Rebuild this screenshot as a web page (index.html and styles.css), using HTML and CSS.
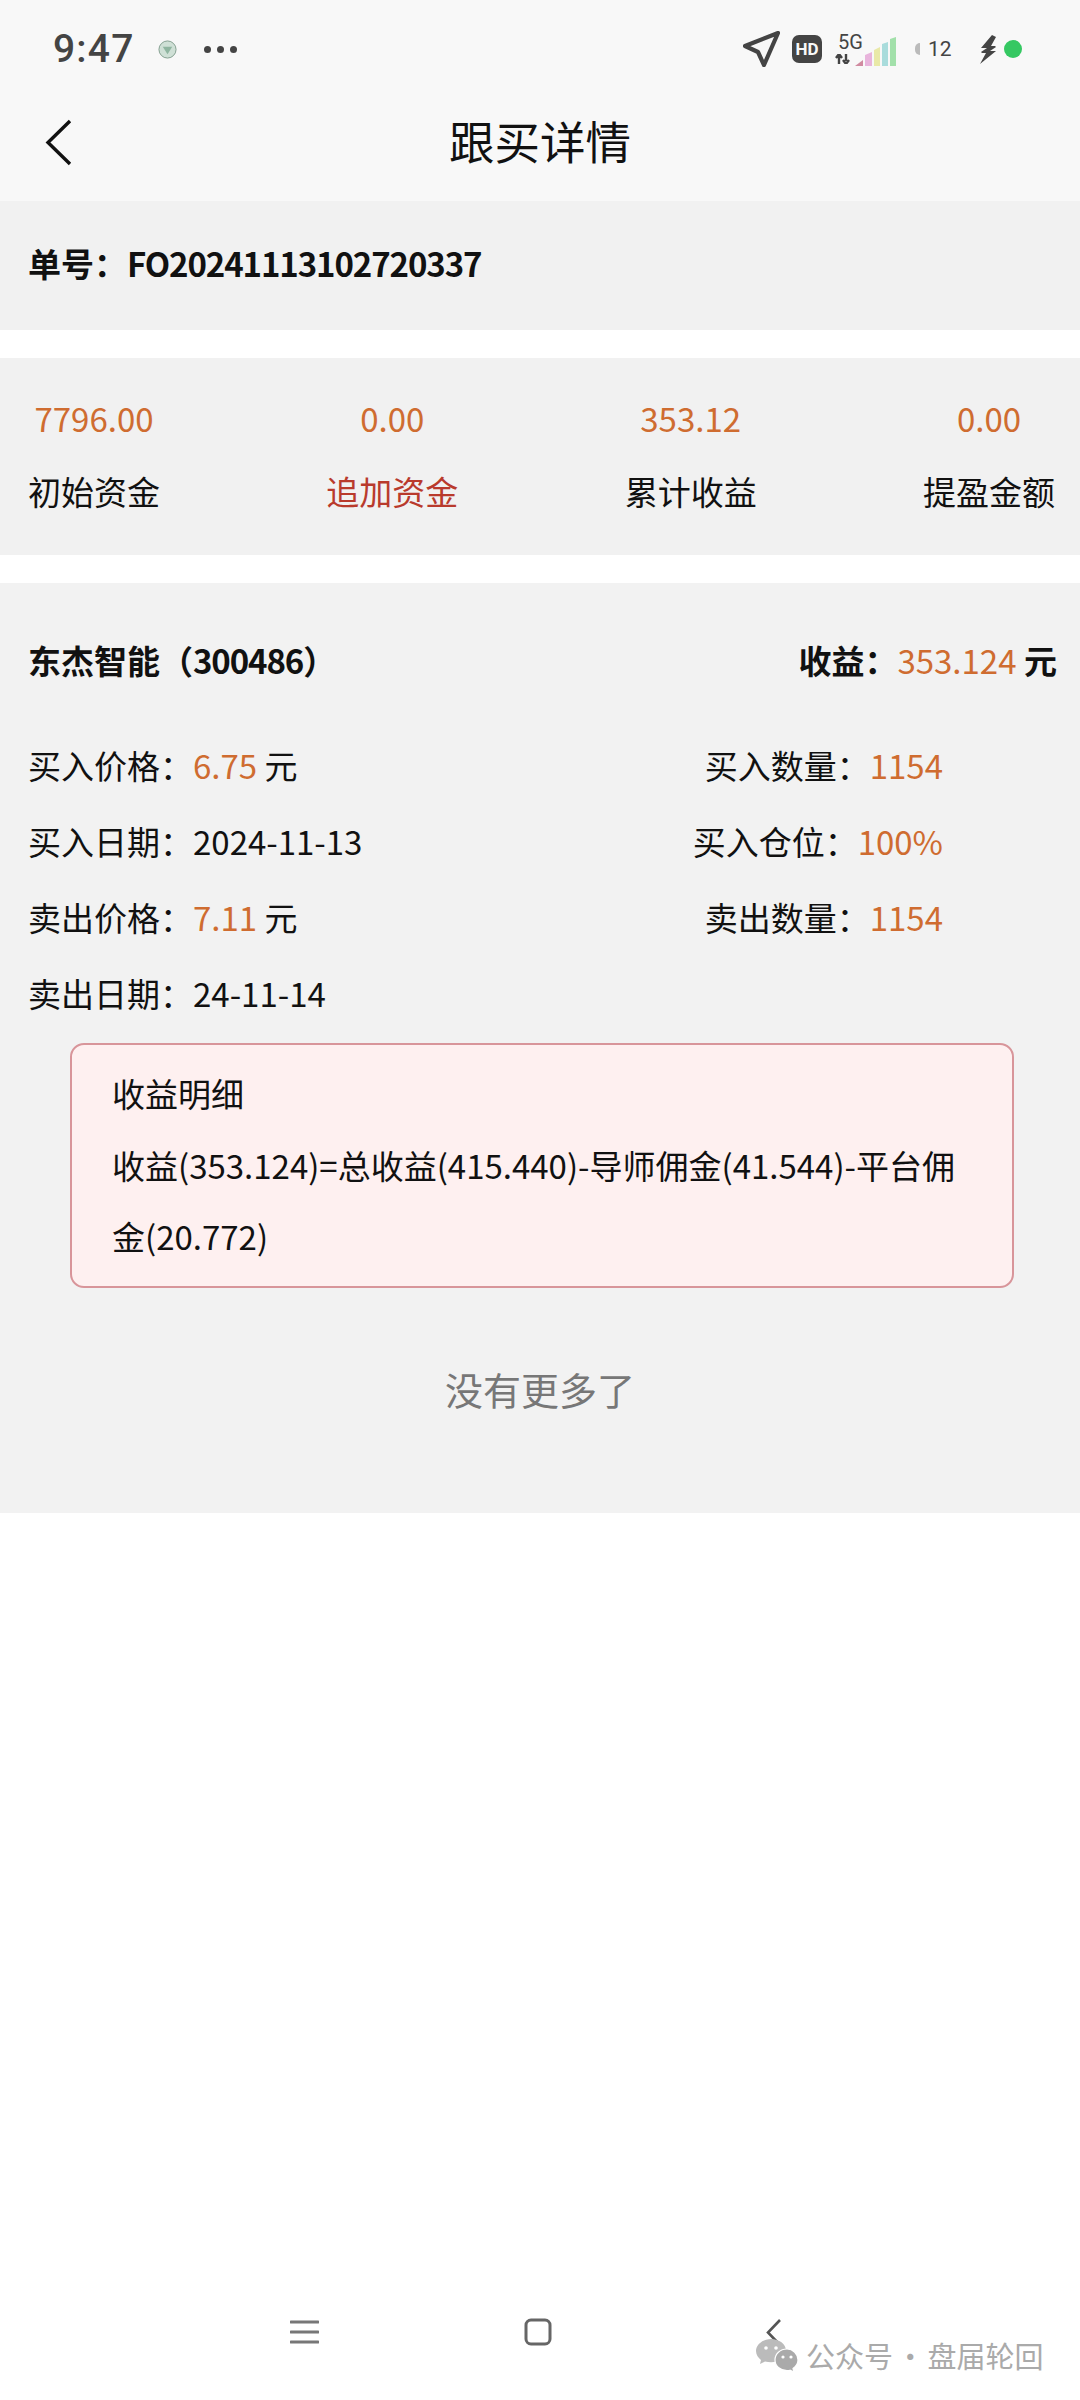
FILE: index.html
```html
<!DOCTYPE html>
<html lang="zh-CN">
<head>
    <meta charset="UTF-8">
    <meta name="viewport" content="width=device-width, initial-scale=1.0">
    <title>跟买详情</title>
    <link rel="stylesheet" href="styles.css">
</head>
<body>
    <div class="pagina">
        <!-- Status bar -->
        <div class="status">
            <span class="ora">9:47</span>
            <svg class="ico-app" viewBox="0 0 20 20">
                <circle cx="10" cy="10" r="9" fill="#cfe0d6" stroke="#7f9c8c" stroke-width="1"/>
                <path d="M5 7h10l-5 8z" fill="#8fb5a0"/>
            </svg>
            <span class="puntini"><i></i><i></i><i></i></span>
            <span class="spazio"></span>
            <svg class="ico-nav" viewBox="0 0 37 36">
                <path d="M35 2 2 15l13 6 6 13z" fill="none" stroke="#444" stroke-width="4.200" stroke-linejoin="round"/>
            </svg>
            <span class="hd">HD</span>
            <span class="rete">
                <span class="cinqueg">5G</span>
                <svg class="frecce" viewBox="0 0 15 10">
                    <path d="M4 10V3M1 4l3-4 3 4M11 0v7M8 6l3 4 3-4" fill="none" stroke="#444" stroke-width="2.400"/>
                </svg>
            </span>
            <svg class="segnale" viewBox="0 0 41 29">
                <path d="M0 29l8-6v6z" fill="#d08aa0"/>
                <path d="M10 29V18l7-3v14z" fill="#e8b4dc"/>
                <path d="M19 29V13l6-3v19z" fill="#e9e9a8"/>
                <path d="M27 29V7l6-2v24z" fill="#a9dcdc"/>
                <path d="M35 29V2l6-2v29z" fill="#a2e0aa"/>
            </svg>
            <span class="mezzaluna"></span>
            <span class="dodici">12</span>
            <svg class="ico-carica" viewBox="0 0 17 29">
                <path d="M12 0 1 13h6l-6 4 1 1h4L0 29l16-13h-6l6-4-1-1h-4l5-9z" fill="#444"/>
            </svg>
            <span class="pallino"></span>
        </div>

        <!-- Titolo -->
        <header class="testata">
            <svg class="indietro" viewBox="0 0 27 47">
                <path d="M25 2 3 23.500 25 45" fill="none" stroke="#111" stroke-width="3.400"/>
            </svg>
            <h1>跟买详情</h1>
        </header>

        <!-- Numero ordine -->
        <section class="ordine">单号：<span class="stretto">FO20241113102720337</span></section>

        <!-- Riepilogo -->
        <section class="riepilogo">
            <div class="voce">
                <div class="arancio">7796.00</div>
                <div class="nome">初始资金</div>
            </div>
            <div class="voce">
                <div class="arancio">0.00</div>
                <div class="nome rosso">追加资金</div>
            </div>
            <div class="voce">
                <div class="arancio">353.12</div>
                <div class="nome">累计收益</div>
            </div>
            <div class="voce">
                <div class="arancio">0.00</div>
                <div class="nome">提盈金额</div>
            </div>
        </section>

        <!-- Dettaglio -->
        <section class="dettaglio">
            <div class="titolo-riga">
                <span class="forte">东杰智能（<span class="stretto">300486</span>）</span>
                <span class="forte">收益：<span class="arancio sottile">353.124</span> 元</span>
            </div>
            <div class="riga">
                <span>买入价格：<span class="arancio">6.75</span> 元</span>
                <span>买入数量：<span class="arancio">1154</span></span>
            </div>
            <div class="riga">
                <span>买入日期：2024-11-13</span>
                <span>买入仓位：<span class="arancio">100%</span></span>
            </div>
            <div class="riga">
                <span>卖出价格：<span class="arancio">7.11</span> 元</span>
                <span>卖出数量：<span class="arancio">1154</span></span>
            </div>
            <div class="riga">
                <span>卖出日期：24-11-14</span>
            </div>
            <div class="riquadro">
                <div>收益明细</div>
                <div>收益(353.124)=总收益(415.440)-导师佣金(41.544)-平台佣金(20.772)</div>
            </div>
            <div class="fine">没有更多了</div>
        </section>

        <!-- Barra di navigazione -->
        <nav class="barra">
            <svg class="nav-menu" viewBox="0 0 29 24">
                <path d="M1 2h27M1 12h27M1 22h27" stroke="#777" stroke-width="3" stroke-linecap="round"/>
            </svg>
            <svg class="nav-casa" viewBox="0 0 28 28">
                <rect x="2" y="2" width="24" height="24" rx="5" fill="none" stroke="#666" stroke-width="3"/>
            </svg>
            <svg class="nav-dietro" viewBox="0 0 15 27">
                <path d="M14 1 2 13.500 14 26" fill="none" stroke="#555" stroke-width="2.600"/>
            </svg>
        </nav>

        <!-- Filigrana -->
        <div class="filigrana">
            <svg class="wechat" viewBox="0 0 43 33">
                <path d="M15 0C7 0 0 5.500 0 12c0 4 2.500 7 5 9l-1 4 5-2.500c2 .5 4 .8 6 .8 8 0 15-5.300 15-11.800S23 0 15 0z" fill="#bbb"/>
                <circle cx="10" cy="9" r="1.800" fill="#fff"/>
                <circle cx="20" cy="9" r="1.800" fill="#fff"/>
                <path d="M31 10c-7 0-12 5-12 11s5 10.500 12 10.500c1 0 2 0 3-.3l4 1.800-1-3.500c3-2 5-5 5-8.500 0-6-5-11-11-11z" fill="#aaa" stroke="#fff" stroke-width="1.200"/>
                <circle cx="27" cy="18" r="1.600" fill="#fff"/>
                <circle cx="35" cy="18" r="1.600" fill="#fff"/>
            </svg>
            <span>公众号 · 盘届轮回</span>
        </div>
    </div>
</body>
</html>
```

FILE: styles.css
```css
/* Stile globale */
body {
    margin: 0;
    padding: 0;
    background-color: #fff;
    color: #111;
    font-family: "Noto Sans CJK SC", "Noto Sans", sans-serif;
    font-size: 33px;
}
.pagina {
    position: relative;
    width: 1080px;
    height: 2400px;
    display: flex;
    flex-direction: column;
    overflow: hidden;
}
.arancio {
    color: #cf6c30;
}
.rosso {
    color: #b93a2c;
}
.stretto {
    letter-spacing: -1.100px;
}

/* Status bar */
.status {
    height: 98px;
    display: flex;
    align-items: center;
    padding: 0 58px 0 53px;
    background-color: #f8f8f8;
    color: #444;
}
.ora {
    font-family: Roboto, sans-serif;
    font-size: 39px;
    font-weight: 500;
    letter-spacing: 1.2px;
    width: 105px;
}
.ico-app {
    width: 19px;
    height: 19px;
}
.puntini {
    display: flex;
    gap: 6px;
    margin-left: 27px;
}
.puntini i {
    width: 7px;
    height: 7px;
    border-radius: 50%;
    background-color: #444;
}
.spazio {
    flex: 1;
}
.ico-nav {
    width: 37px;
    height: 36px;
}
.hd {
    width: 30px;
    height: 28px;
    margin-left: 12px;
    border-radius: 7px;
    background-color: #444;
    color: #f8f8f8;
    font-family: Roboto, sans-serif;
    font-size: 17px;
    font-weight: 700;
    line-height: 28px;
    text-align: center;
}
.rete {
    width: 28px;
    margin-left: 13px;
    display: flex;
    flex-direction: column;
    gap: 4px;
}
.cinqueg {
    font-family: Roboto, sans-serif;
    font-size: 20px;
    line-height: 16px;
    padding-left: 3px;
}
.frecce {
    width: 15px;
    height: 10px;
}
.segnale {
    width: 41px;
    height: 29px;
    margin-left: -8px;
    margin-top: 4px;
}
.mezzaluna {
    width: 5px;
    height: 12px;
    margin-left: 19px;
    border-radius: 6px 0 0 6px;
    background-color: #bbb;
}
.dodici {
    width: 22px;
    margin-left: 8px;
    font-family: Roboto, sans-serif;
    font-size: 21px;
}
.ico-carica {
    width: 17px;
    height: 29px;
    margin-left: 30px;
}
.pallino {
    width: 18px;
    height: 18px;
    margin-left: 7px;
    border-radius: 50%;
    background-color: #35c862;
}

/* Titolo */
.testata {
    height: 103px;
    padding: 0 0 15px 45px;
    box-sizing: border-box;
    display: flex;
    align-items: center;
    background-color: #f8f8f8;
}
.indietro {
    width: 27px;
    height: 47px;
}
.testata h1 {
    margin: 0 0 5px 377px;
    font-size: 45.500px;
    font-weight: 400;
    line-height: 60px;
}

/* Sezioni */
.ordine {
    height: 129px;
    box-sizing: border-box;
    margin-bottom: 28px;
    padding: 0 0 5px 28px;
    display: flex;
    align-items: center;
    background-color: #f1f1f1;
    font-weight: 700;
}
.riepilogo {
    display: flex;
    justify-content: space-between;
    padding: 25px 25px 28px 28px;
    background-color: #f1f1f1;
    line-height: 71px;
}
.voce {
    text-align: center;
}
.nome {
    margin-top: 2px;
}
.dettaglio {
    margin-top: 28px;
    padding: 41px 0 88px;
    background-color: #f2f2f2;
}
.titolo-riga {
    display: flex;
    justify-content: space-between;
    padding: 0 23px 0 28px;
    margin-bottom: 31px;
    line-height: 72px;
}
.forte {
    font-weight: 700;
}
.sottile {
    font-weight: 400;
}
.riga {
    display: flex;
    justify-content: space-between;
    padding: 0 137px 0 28px;
    line-height: 76px;
}
.riquadro {
    margin: 12px 66px 0 70px;
    padding: 13px 40px 13px;
    background-color: #fef0f0;
    border: 2px solid #d8959a;
    border-radius: 14px;
    line-height: 71.500px;
}
.fine {
    margin-top: 65px;
    color: #777;
    font-size: 38px;
    line-height: 72px;
    text-align: center;
}

/* Barra di navigazione */
.barra {
    margin-top: auto;
    margin-bottom: 54px;
    padding-left: 290px;
    display: flex;
    align-items: center;
    gap: 205px;
}
.nav-menu {
    width: 29px;
    height: 24px;
}
.nav-casa {
    width: 28px;
    height: 28px;
}
.nav-dietro {
    width: 15px;
    height: 27px;
    margin-left: 9px;
}

/* Filigrana */
.filigrana {
    position: absolute;
    top: 2335px;
    left: 756px;
    display: flex;
    align-items: center;
    gap: 7px;
    color: #aaa;
    font-size: 29px;
    word-spacing: -3.800px;
    line-height: 40px;
    white-space: nowrap;
}
.wechat {
    width: 43px;
    height: 33px;
}
```
